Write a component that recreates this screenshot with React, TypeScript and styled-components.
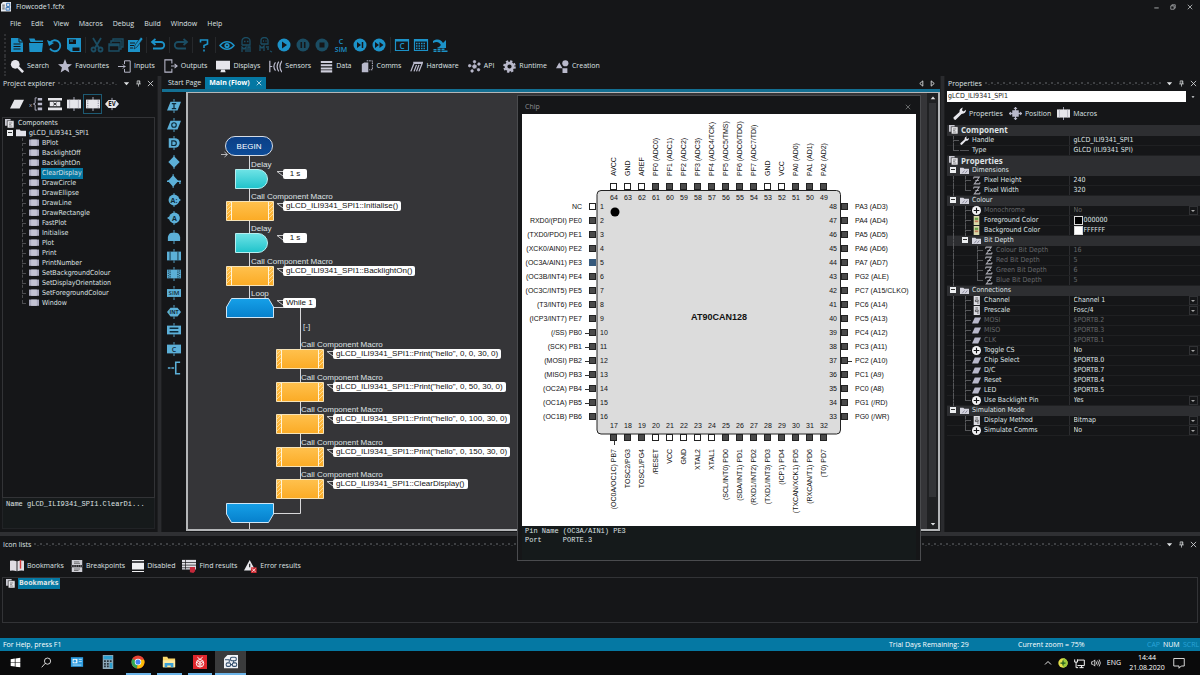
import React from 'react';
import styled, { createGlobalStyle, css } from 'styled-components';

const UI = `"Open Sans", "Noto Sans", sans-serif`;
const GRID = `"DejaVu Sans Condensed", "DejaVu Sans", sans-serif`;
const ARIAL = `"Liberation Sans", Arial, sans-serif`;
const MONO = `"Liberation Mono", "Courier New", monospace`;

const c = {
  bg: '#151618',
  line: '#323336',
  split: '#2a2b2e',
  text: '#dfe2e4',
  dim: '#66686b',
  blue: '#1c92c8',
  dimBlue: '#1b4d63',
  accent: '#0578a3',
  palette: '#5cb0d8',
  lilac: '#b9b9cb',
};

const Global = createGlobalStyle`
  *, *::before, *::after { box-sizing: border-box; }
  body { margin: 0; background: ${c.bg}; color: ${c.text}; font: 7px/10px ${UI}; overflow-x: hidden; }
  button, input, select { font: inherit; color: inherit; margin: 0; padding: 0; border: 0; background: none; border-radius: 0; }
  ul { list-style: none; margin: 0; padding: 0; }
  svg { display: block; flex: none; }
`;

/* ---------- icons ---------- */

const art: Record<string, React.ReactNode> = {
  newDoc: <g fill={c.blue}><path d="M2 1h8l4 4v10H2z" /><path d="M4.500 7h7M4.500 9.500h7M4.500 12h7M10 1v4h4" stroke={c.bg} fill="none" /></g>,
  folder: <g fill={c.blue}><path d="M1 1.500h5.500l1 2H15V5H2.500z" /><path d="M1 6h14l-1 9H1.500z" /></g>,
  reload: <g><path d="M3 6a5.500 5.500 0 1 1 0 5.500" fill="none" stroke={c.blue} strokeWidth="1.800" /><path d="M0 3l2 6 5-3z" fill={c.blue} /></g>,
  save: <g fill={c.blue}><path d="M1 1h14v14H5l-4-3z" /><path d="M3 2.500h7v4.500H3zM6.500 10.500h7V14h-7z" fill={c.bg} /><path d="M4 3.500h3v1H4z" /></g>,
  cut: <g stroke={c.dimBlue} fill="none" strokeWidth="1.800"><path d="M4 1l6 10M12 1L6 11" /><circle cx="4.500" cy="12.500" r="2" /><circle cx="11.500" cy="12.500" r="2" /></g>,
  copies: <g stroke={c.dimBlue} fill="none" strokeWidth="1.400"><path d="M5 4V2h10v8h-2M3 6V4h10v8h-2" /><path d="M1 7h10v7H1zM1 8.500h10" /></g>,
  edit: <g fill={c.blue}><path d="M1 3h12v12H1z" /><path d="M3 6h5M3 8.500h4M3 11h3" stroke={c.bg} /><path d="M7 12l1-4 6-8 2 2-6 8z" stroke={c.bg} strokeWidth=".6" /></g>,
  undo: <g fill="none" stroke={c.blue} strokeWidth="1.800"><path d="M2 5h9a3.200 3.200 0 0 1 0 6.500H3" /><path d="M5.500 2L2 5l3.500 3" /></g>,
  redo: <g fill="none" stroke={c.dimBlue} strokeWidth="1.800"><path d="M14 5H5a3.200 3.200 0 0 0 0 6.500h8" /><path d="M10.500 2L14 5l-3.500 3" /></g>,
  help: <g fill="none" stroke={c.blue} strokeWidth="1.600"><path d="M4.500 5.500V3h7v4L8 8.500V11" /><path d="M8 12.500v2" /></g>,
  eye: <g><path d="M1 8.500c4-5 10-5 14 0-4 5-10 5-14 0z" fill="none" stroke={c.blue} strokeWidth="1.500" /><circle cx="8" cy="8.500" r="2.600" fill={c.blue} /><circle cx="8" cy="8.500" r=".8" fill={c.bg} /></g>,
  ghost: <g fill="none" stroke={c.dimBlue} strokeWidth="1.300"><path d="M4 8V4a4 3.500 0 0 1 8 0v4H4M6 4.500h1.500M9 4.500h1.500M4 15v-5l2 2 2-2v5M10 15v-5h2v5" /></g>,
  ghostR: <g fill="none" stroke={c.dimBlue} strokeWidth="1.300"><path d="M4 7V3.500a3.500 3 0 0 1 7 0V7H4M6 4h1M8.500 4h1M3 14v-5l2 2 2-2v5M9 10h3M10 12h2M13 14l2 1" /></g>,
  play: <g><circle cx="8" cy="8" r="6.500" fill={c.blue} /><path d="M6 4.500l5 3.500-5 3.500z" fill={c.bg} /></g>,
  pause: <g><circle cx="8" cy="8" r="6.500" fill={c.dimBlue} /><path d="M6.300 5v6M9.700 5v6" stroke={c.bg} strokeWidth="1.600" /></g>,
  stop: <g><circle cx="8" cy="8" r="6.500" fill={c.dimBlue} /><path d="M5.500 5.500h5v5h-5z" fill={c.bg} /></g>,
  csim: <g fill={c.blue} fontFamily={UI} fontSize="7" fontWeight="600" textAnchor="middle"><text x="8" y="6.500">C</text><text x="8" y="14.500">SIM</text></g>,
  step: <g><circle cx="8" cy="8" r="6.500" fill={c.blue} /><path d="M5 5l4 3-4 3z" fill={c.bg} /><path d="M10.500 5v6" stroke={c.bg} strokeWidth="1.500" /></g>,
  ff: <g><circle cx="8" cy="8" r="6.500" fill={c.blue} /><path d="M4 5l4 3-4 3zM8.500 5l4 3-4 3z" fill={c.bg} /></g>,
  cwin: <g><path d="M1.500 2.500h13v11h-13z" fill="none" stroke={c.blue} strokeWidth="1.200" /><path d="M1 3.500h14" stroke={c.blue} strokeWidth="2" /><text x="8" y="12" fontFamily={UI} fontSize="8" fontWeight="600" textAnchor="middle" fill={c.blue}>C</text></g>,
  hex: <g stroke={c.blue} fill="none"><path d="M1.500 2.500h13v11h-13z" strokeWidth="1.200" /><path d="M1 3.500h14" strokeWidth="2" /><path d="M3 6.500h10M3 9h10M3 11.500h10" strokeWidth="1.400" strokeDasharray="1.500 1" /></g>,
  flash: <g><path d="M3 15v-3M7 15v-5M11 15v-4M14 15v-2" stroke={c.blue} strokeWidth="3" strokeDasharray="1.500 .6" /><path d="M1 4c5-3 8-1 10 2l3-3v8H6l3-3C7 5 5 4 1 6z" fill={c.blue} /></g>,

  search: <g><circle cx="6" cy="6" r="5" fill="#e6e6ec" /><path d="M9 9l6 6" stroke="#e6e6ec" strokeWidth="3" /></g>,
  star: <path d="M8 0l2.200 5.600 5.800.400-4.500 3.700 1.500 5.800L8 12.300 3 15.500l1.500-5.800L0 6l5.800-.4z" fill={c.lilac} />,
  input: <g fill="none" stroke={c.lilac} strokeWidth="1.200"><path d="M8 5V1h7v14H8v-4" /><path d="M0 8h9M6 5.500L8.500 8 6 10.500" /></g>,
  output: <g fill="none" stroke={c.lilac} strokeWidth="1.200"><path d="M9 5V1H1v14h8v-4" /><path d="M8 8h7M12 5.500l3 2.500-3 2.500" /></g>,
  display: <g fill="#e6e6ec"><path d="M0 2h16v10H0z" /><path d="M6 12h4l1 3H5z" /></g>,
  sensor: <g fill="none" stroke={c.lilac} strokeWidth="1.500"><path d="M1 1v14M1 8h3M8 3q-4 5 0 10M12 2q-4 6 0 12M16 1q-5 7 0 14" /></g>,
  data: <path d="M1 2.500h14M1 6.500h14M1 10.500h14M1 14h14" stroke="#cdcdda" strokeWidth="2.500" />,
  comms: <g><path d="M1 5l3-2h5v12H1z" fill={c.lilac} /><path d="M7 1h7v11h-4" fill="none" stroke={c.lilac} strokeWidth="1.200" strokeDasharray="2 1" /></g>,
  hardware: <g fill="none" stroke={c.lilac} strokeWidth="1.600"><path d="M1 14L5 4h10l-4 10M5 14l3-8M8 14l3-8M4 3h12" /></g>,
  api: <g fill={c.lilac} stroke={c.lilac}><circle cx="8" cy="8" r="2.200" /><path d="M8 8V2M8 8l5-3M8 8l5 4M8 8l-3 5M8 8L2 7" strokeWidth=".4" /><circle cx="8" cy="2" r="1.500" /><circle cx="13.500" cy="5" r="1.500" /><circle cx="13" cy="12" r="1.500" /><circle cx="5" cy="13.500" r="1.500" /><circle cx="2" cy="7" r="1.500" /></g>,
  gear: <g><circle cx="8" cy="8" r="4.300" fill="none" stroke={c.lilac} strokeWidth="3.400" /><circle cx="8" cy="8" r="6.600" fill="none" stroke={c.lilac} strokeWidth="2.400" strokeDasharray="2.800 2.380" /></g>,
  creation: <g fill={c.lilac}><circle cx="11.500" cy="4" r="3.800" /><path d="M0 10l4-7 4 7zM8 10h6v6H8z" /></g>,

  para: <path d="M5 3h11l-5 10H0z" fill="#e6e6ea" />,
  vars: <g><text x="0" y="11" fontFamily={UI} fontSize="7" fill={c.lilac}>x</text><path d="M9 1H7v6L5 8l2 1v6h2" fill="none" stroke={c.lilac} /><path d="M10 1h5v3h-5zM10 6.500h5v3h-5zM10 12h5v3h-5z" fill={c.lilac} /></g>,
  lists: <g fill="#e6e6ea"><path d="M0 1h16v3H0zM0 12h16v3H0zM2 5.500h12v5H2z" /><path d="M6 6.500l4 3M10 6.500l-4 3" stroke={c.bg} /></g>,
  macro: <g><path d="M8 0v16" stroke={c.lilac} /><path d="M0 3h16v10H0z" fill="#e6e6ea" /><path d="M3 3v10M13 3v10" stroke="#a5a5b2" strokeWidth=".8" /></g>,
  compMacro: <g><path d="M8 0v16" stroke={c.lilac} /><path d="M0 3h16v10H0z" fill="#e6e6ea" /><path d="M2 3v10M14 3v10" stroke="#77778a" strokeWidth="1.200" strokeDasharray="1 1" /></g>,
  event: <g><path d="M8 1v14" stroke={c.lilac} /><path d="M4 3.500h8L16 8l-4 4.500H4L0 8z" fill="#e6e6ea" /><text x="8" y="10.500" fontFamily={UI} fontSize="7" fontWeight="700" textAnchor="middle" fill={c.bg}>EV</text></g>,

  pIn: <g><path d="M4 3h12l-4 10H0z" fill={c.palette} /><path d="M8 0v3M8 13v3" stroke={c.palette} /><path d="M5.500 5.200h5M8 5.200v5.800M5.500 11h5" stroke="#0e2a38" strokeWidth="1.400" /></g>,
  pOut: <g><path d="M4 3h12l-4 10H0z" fill={c.palette} /><path d="M8 0v3M8 13v3" stroke={c.palette} /><circle cx="8" cy="8" r="2.600" fill="none" stroke="#0e2a38" strokeWidth="1.300" /></g>,
  pDelay: <g><path d="M2 2.500h7a5.500 5.500 0 0 1 0 11H2z" fill={c.palette} /><path d="M8 0v3M8 13v3" stroke={c.palette} /><path d="M5.500 5.500H8a2.500 2.500 0 0 1 0 5.300H5.500z" fill="none" stroke="#0e2a38" strokeWidth="1.300" /></g>,
  pDec: <g fill={c.palette}><path d="M8 1.500L14.500 8 8 14.500 1.500 8z" /><path d="M7.500 0h1v16h-1z" /></g>,
  pSwitch: <g fill={c.palette}><path d="M7 1.500L13 8l-6 6.500L1 8z" /><path d="M0 7.500h16v1.500H0zM14 7.500h1.500v4H14z" /><path d="M6.500 0h1v16h-1z" /></g>,
  pConnA: <g><path d="M7.500 0h1v16h-1z" fill={c.palette} /><circle cx="8" cy="8" r="6.200" fill={c.palette} /><path d="M13 6l3 2-3 2z" fill={c.palette} /><text x="8" y="11" fontFamily={UI} fontSize="8" fontWeight="700" textAnchor="middle" fill="#0e2a38">A:</text></g>,
  pConnB: <g><path d="M7.500 0h1v16h-1z" fill={c.palette} /><circle cx="8.500" cy="8" r="6.200" fill={c.palette} /><path d="M0 8l3-2v4z" fill={c.palette} /><text x="8.500" y="11" fontFamily={UI} fontSize="8" fontWeight="700" textAnchor="middle" fill="#0e2a38">A</text></g>,
  pLoop: <g fill={c.palette}><path d="M1 12.500V8q1-5 5-5h4q4 0 5 5v4.500z" /><path d="M7.500 0h1v16h-1z" /></g>,
  pMacro: <g><path d="M0 3h16v10H0z" fill={c.palette} /><path d="M3.500 3v10M12.500 3v10" stroke="#0e2a38" /><path d="M8 0v3M8 13v3" stroke={c.palette} /></g>,
  pComp: <g><path d="M0 3h16v10H0z" fill={c.palette} /><path d="M1.500 3v10M14.500 3v10M3.500 4v10M12.500 4v10" stroke="#0e2a38" strokeWidth="1.200" strokeDasharray="1 1" /><path d="M8 0v3M8 13v3" stroke={c.palette} /></g>,
  pSim: <g><path d="M0 3.500h16v9H0z" fill={c.palette} /><text x="8" y="10.500" fontFamily={UI} fontSize="7" fontWeight="600" textAnchor="middle" fill="#0e2a38">SIM</text><path d="M8 0v3M8 13v3" stroke={c.palette} /></g>,
  pInt: <g><path d="M4 3h8l4 5-4 5H4L0 8z" fill={c.palette} /><text x="8" y="10.500" fontFamily={UI} fontSize="6" fontWeight="700" textAnchor="middle" fill="#0e2a38">INT</text><path d="M8 0v3M8 13v3" stroke={c.palette} /></g>,
  pCalc: <g><path d="M0 3h16v10H0z" fill={c.palette} /><path d="M3 6h10M3 10h10" stroke="#0e2a38" strokeWidth="1.600" /><path d="M8 0v3M8 13v3" stroke={c.palette} /></g>,
  pC: <g><path d="M0 3h16v10H0z" fill={c.palette} /><text x="8" y="11" fontFamily={UI} fontSize="8" fontWeight="600" textAnchor="middle" fill="#0e2a38">C</text><path d="M8 0v3M8 13v3" stroke={c.palette} /></g>,
  pNote: <g fill="none" stroke={c.palette} strokeWidth="1.800"><path d="M15 1.500h-5v13h5" /><path d="M1 8h9" strokeDasharray="3 1" /></g>,

  tree: <g><path d="M0 0h10v12H0z" fill="#c8c8d0" /><path d="M4 3h12v13H4z" fill="#ececf0" stroke={c.bg} /><path d="M7 7h6M7 9.500h4M7 12.500h6" stroke="#555" strokeWidth="1.200" /></g>,
  openFolder: <path d="M0 2.500h6l1.500 2H16V13H0z" fill="#e0e0e8" />,
  cell: <g><path d="M0 2.500h16v10H0z" fill="#a9a9bd" /><path d="M3.500 2.500h9v10h-9z" fill="#c3c3d3" /></g>,
  group: <g><path d="M0 3h6l1.500 2H16v9H0z" fill="#d4d4de" /><path d="M4 13l4-5M9 13l4-5" stroke="#77778a" strokeWidth="1.400" /></g>,
  wrench: <path d="M1 15l-.5-2L8 6q-.5-4 4-5.500l-1 3.500 2 1.500 3-2q0 5-5.500 5L3 16z" fill="#e8e8ee" />,
  dash: <path d="M0 8h16" stroke="#6a6a6e" strokeWidth="1.300" />,
  zed: <g fill="none" stroke="#a9a9b2" strokeWidth="1.800"><path d="M3 2h10L4 14h10M3 2v3M14 14v-3M6 8h6" /></g>,
  plus: <g><circle cx="8" cy="8" r="8" fill="#f2f2f4" /><path d="M8 3v10M3 8h10" stroke={c.bg} strokeWidth="2" /></g>,
  color: <g><path d="M3 0h10v16H3z" fill="#d8d8a8" /><path d="M5 3h6v4H5z" fill="#68a04a" /><path d="M5 8h6v3H5z" fill="#c07a5a" /></g>,
  doc: <g><path d="M3 0h11v16H3z" fill="#dedee4" /><path d="M6 3.500h5M6 7h5v3H6zM9 12.500h3" stroke="#333" strokeWidth="1.300" fill="none" /></g>,
  pin: <path d="M5 2.500h11l-5 11H0z" fill={c.lilac} />,
  position: <g fill={c.lilac}><path d="M4 4h8v8H4z" /><path d="M7.200 0h1.600v16H7.200zM0 7.200h16v1.600H0z" /><path d="M5.500 2.500L8 0l2.500 2.500zM5.500 13.500L8 16l2.500-2.500zM2.500 5.500L0 8l2.500 2.500zM13.500 5.500L16 8l-2.500 2.500z" /></g>,

  book: <g><path d="M0 2q4-1 7.500.5V14Q4 12.500 0 13.500zM16 2q-4-1-7.500.5V14q3.500-1.500 7.500-.5z" fill="#e0dde4" /><path d="M12 1v10" stroke="#d43a3a" strokeWidth="1.600" /></g>,
  breakpt: <g><path d="M1 0h14v6.500H1zM1 9.500h14V16H1z" fill="#cfcfd6" /><path d="M4 2.500h7M4 4.500h8M4 12h8M4 14h6" stroke="#555" /><path d="M0 8h16" stroke="#cfcfd6" strokeDasharray="2 1" /></g>,
  disabled: <g fill="#f0f0f2"><path d="M0 0h16v1.500H0zM0 3.500h16v9H0zM0 14.500h16V16H0z" /></g>,
  find: <g><path d="M0 1h16v11H0z" fill="#e0e0e6" /><path d="M0 4h16M0 7h16M0 10h9M4 1v11" stroke={c.bg} strokeWidth=".8" /><path d="M9 9h6v5l-2 2-4-1z" fill="#c4283a" /></g>,
  error: <g><path d="M7 0l7 13H0z" fill="#e8e8ec" /><path d="M7 4.500v4.500" stroke={c.bg} strokeWidth="1.400" /><path d="M8.500 9h7v7h-7z" fill="#d22c34" /><path d="M10 10.500l4 4M14 10.500l-4 4" stroke="#fff" /></g>,

  winLogo: <path d="M1 3.200l6-.9v5.400H1zM8 2.200l7-1v6.500H8zM1 8.500h6v5.400l-6-.9zM8 8.500h7V15l-7-1z" fill="#fff" />,
  taskSearch: <g fill="none" stroke="#fff" strokeWidth="1.200"><circle cx="9.500" cy="6" r="4.500" /><path d="M6.200 9.200L1 15" /></g>,
  mail: <g><path d="M1 2.500h14v11H1z" fill="#2d9ce0" /><path d="M3 4.500h5.500v5H3z" fill="#e8f4fc" /><path d="M10 5h3.500M10 7.500h3.500M3 11.500h10" stroke="#bfe2f8" /><circle cx="5.500" cy="7" r="1.500" fill="#2d9ce0" /></g>,
  calc: <g><path d="M2 0h12v16H2z" fill="#8ea8b8" /><path d="M3 1h10v4H3z" fill="#2da0d0" /><path d="M3.500 7h9M3.500 10h9M3.500 13h9" stroke="#26313a" strokeWidth="2" strokeDasharray="2 1.300" /><path d="M10 9h3v6h-3z" fill="#2da0d0" /></g>,
  chrome: <g><circle cx="8" cy="8" r="7.500" fill="#e94335" /><path d="M8 8L1.500 4.250A7.500 7.500 0 0 0 7 15.400z" fill="#34a853" /><path d="M8 8l-1 7.400A7.500 7.500 0 0 0 15 5.500H8z" fill="#fbbc05" /><circle cx="8" cy="8" r="3.700" fill="#fff" /><circle cx="8" cy="8" r="2.900" fill="#4285f4" /></g>,
  files: <g><path d="M1 2h5l1 2h8v10H1z" fill="#fbd86a" /><path d="M1 6h14v8H1z" fill="#fde9a0" /><path d="M3 14V9h10v5h-3v-2H6v2z" fill="#3aa0d8" /></g>,
  berry: <g><path d="M0 0h16v16H0z" fill="#e0262c" /><g fill="none" stroke="#fff" strokeWidth="1.100"><circle cx="8" cy="9.500" r="4.300" /><circle cx="6.500" cy="8.500" r="1.300" /><circle cx="9.500" cy="8.500" r="1.300" /><circle cx="8" cy="11.500" r="1.300" /><path d="M8 5L5 2.500M8 5l3-2.500" /></g></g>,
  flow: <g><path d="M4 0h12v15H0V4z" fill="#f2f4f8" /><g fill="none" stroke="#35506e" strokeWidth="1.200"><rect x="7.500" y="2.500" width="6.500" height="4" rx="1.500" /><rect x="2.500" y="9" width="5" height="4" rx="1.500" /><rect x="9.500" y="9" width="5" height="4" rx="1.500" /><path d="M11 6.500V9M7.500 11h2M1 5.500h5V8" /></g></g>,
  appFlow: <g><path d="M3 0h13v15H0V3z" fill="#e8ecf2" /><path d="M2 5h4M2 8h4M2 11h4" stroke="#444" strokeWidth="1.400" /><g fill="none" stroke="#2a6ab0" strokeWidth="1.400"><path d="M9 2h5v5H9zM8 9h6v4H8zM11 7v2" /></g></g>,

  down: <path d="M2 5h12l-6 7z" fill={c.text} />,
  thumb: <path d="M5 2h6M5 2v7M11 2v7M9.500 2v7M3 9h10M8 9v6" fill="none" stroke={c.text} strokeWidth="1.600" />,
  close: <path d="M2 2l12 12M14 2L2 14" stroke="currentColor" strokeWidth="1.800" />,
  min: <path d="M3 9h10" stroke={c.text} strokeWidth="1.600" />,
  restore: <path d="M5 5V2h9v9h-3M2 5h9v9H2z" fill="none" stroke={c.text} strokeWidth="1.500" />,
  left: <path d="M11 2v12L4 8z" fill="none" stroke={c.text} strokeWidth="2" />,
  right: <path d="M5 2v12l7-6z" fill="none" stroke={c.text} strokeWidth="2" />,
  up: <path d="M2 11h12L8 4z" fill={c.text} />,
  chev: <path d="M2 11l6-6 6 6" fill="none" stroke="#fff" strokeWidth="1.800" />,
  shield: <g><circle cx="8" cy="8" r="7.500" fill="#e4e04a" /><path d="M8 .5a7.500 7.500 0 0 1 0 15" fill="#9ccb3c" /><path d="M8 4v8M4 8h8" stroke="#1f5a1f" strokeWidth="2" /></g>,
  network: <g fill="none" stroke="#fff" strokeWidth="1.400"><path d="M5 3h10v8H5M8 14h6M11 11v3M1 2v4h4V2M3 6v8h3" /></g>,
  volume: <g fill="none" stroke="#fff" strokeWidth="1.200"><path d="M1 6h2l3-3v10l-3-3H1zM8 5.500q2 2.500 0 5M10.500 4q3 4 0 8M13 2.500q4 5.500 0 11" /></g>,
  action: <path d="M1 2h14v10h-4l-3 3v-3H1z" fill="none" stroke="#fff" strokeWidth="1.100" />,
};

const Icon = ({ name, size = 14 }: { name: string; size?: number }) => (
  <svg width={size} height={size} viewBox="0 0 16 16" aria-hidden="true">{art[name]}</svg>
);

/* ---------- shell ---------- */

const Page = styled.div`
  min-height: 100vh;
  display: flex;
  flex-direction: column;
`;

const TitleBar = styled.header`
  height: 14px;
  display: flex;
  align-items: center;
  gap: 5px;
  padding: 0 4px 0 1px;
`;
const WindowTitle = styled.h1`
  flex: 1;
  margin: 0;
  font: 400 7px/12px ${UI};
`;
const IconButton = styled.button<{ $w?: number }>`
  width: ${p => p.$w ?? 12}px;
  height: 12px;
  display: flex;
  align-items: center;
  justify-content: center;
`;

const MenuBar = styled.nav`
  height: 20px;
  display: flex;
  align-items: center;
  gap: 10px;
  padding: 0 10px;
`;

const gripper = css`
  border-left: 2px dotted #2f3033;
`;
const ToolBar = styled.div`
  ${gripper}
  height: 22px;
  margin-left: 4px;
  padding-left: 3px;
  display: flex;
  align-items: center;
  gap: 3px;
`;
const ToolButton = styled.button`
  width: 16px;
  height: 18px;
  display: flex;
  align-items: center;
  justify-content: center;
`;
const Divider = styled.span`
  width: 1px;
  height: 16px;
  background: #26282b;
`;
const ToolBoxBar = styled.div`
  ${gripper}
  height: 20px;
  margin-left: 4px;
  padding-left: 4px;
  display: flex;
  align-items: center;
  gap: 9px;
`;
const LabelButton = styled.button`
  display: flex;
  align-items: center;
  gap: 3px;
  white-space: nowrap;
`;

const Workspace = styled.main`
  flex: 1;
  display: grid;
  grid-template-columns: 157px 5px minmax(0, 1fr) 5px 255px;
`;
const Splitter = styled.div`
  background: ${c.split};
  border-left: 1px solid #1d1e20;
  border-right: 1px solid #1d1e20;
`;
const HSplitter = styled.div`
  height: 4px;
  background: #2f3033;
`;

const Panel = styled.section`
  display: flex;
  flex-direction: column;
  min-width: 0;
`;
const PanelHead = styled.div`
  height: 15px;
  display: flex;
  align-items: center;
  padding: 0 1px 0 3px;
`;
const PanelTitle = styled.h2`
  margin: 0 3px 0 0;
  font: 400 7px/12px ${UI};
  white-space: nowrap;
`;
const Grip = styled.span`
  flex: 1;
  height: 3px;
  margin-right: 2px;
  background:
    radial-gradient(circle at 1px 1px, #3e4043 1px, transparent 1px) 0 0 / 6px 4px,
    radial-gradient(circle at 1px 1px, #303235 1px, transparent 1px) 3px 2px / 6px 4px;
`;

const DockHead = ({ title }: { title: string }) => (
  <PanelHead>
    <PanelTitle>{title}</PanelTitle>
    <Grip />
    <IconButton aria-label="Window position"><Icon name="down" size={7} /></IconButton>
    <IconButton aria-label="Auto hide"><Icon name="thumb" size={7} /></IconButton>
    <IconButton aria-label="Close"><Icon name="close" size={7} /></IconButton>
  </PanelHead>
);

/* ---------- project explorer ---------- */

const ViewBar = styled.div`
  height: 26px;
  display: flex;
  align-items: center;
  padding-left: 7px;
`;
const ViewButton = styled.button<{ $on?: boolean }>`
  width: 19px;
  height: 20px;
  display: flex;
  align-items: center;
  justify-content: center;
  border: 1px solid ${p => (p.$on ? '#1d5a73' : 'transparent')};
`;
const TreeBox = styled.div`
  flex: 1;
  margin: 0 2px;
  border: 1px solid ${c.line};
  font: 7px/10px ${GRID};
`;
const TreeRow = styled.li<{ $pad?: number }>`
  height: 10px;
  display: flex;
  align-items: center;
  gap: 3px;
  padding-left: ${p => p.$pad ?? 0}px;
`;
const TreeRoot = styled(TreeRow)`
  gap: 4px;
`;
const Branch = styled.ul`
  position: relative;
  margin-left: 19px;
  &::before {
    content: '';
    position: absolute;
    top: 0;
    bottom: 5px;
    left: 0;
    border-left: 1px dashed #4c4d50;
  }
`;
const Twig = styled.span`
  width: 4px;
  border-top: 1px dashed #4c4d50;
`;
const TreeLabel = styled.span<{ $on?: boolean; $bold?: boolean }>`
  line-height: 9px;
  font-weight: ${p => (p.$bold ? 700 : 400)};
  ${p => p.$on && css`background: ${c.accent}; outline: 1px solid ${c.accent};`}
`;
const Toggle = styled.button`
  width: 6px;
  height: 6px;
  background: #eceef0;
  position: relative;
  flex: none;
  &::after {
    content: '';
    position: absolute;
    left: 1px;
    right: 1px;
    top: 2px;
    height: 1px;
    background: #333;
  }
`;
const InfoPane = styled.pre`
  margin: 0 2px 3px;
  height: 31px;
  padding: 1px 3px;
  border: 1px solid #212326;
  border-top: 0;
  background: #161a1b;
  font: 7px/10px ${MONO};
  overflow: hidden;
`;

const macros = ['BPlot', 'BacklightOff', 'BacklightOn', 'ClearDisplay', 'DrawCircle', 'DrawEllipse', 'DrawLine',
  'DrawRectangle', 'FastPlot', 'Initialise', 'Plot', 'Print', 'PrintNumber', 'SetBackgroundColour',
  'SetDisplayOrientation', 'SetForegroundColour', 'Window'];

const Explorer = () => (
  <Panel>
    <DockHead title="Project explorer" />
    <ViewBar>
      {['para', 'vars', 'lists', 'macro', 'compMacro', 'event'].map(n => (
        <ViewButton key={n} aria-label={n} $on={n === 'compMacro'}><Icon name={n} /></ViewButton>
      ))}
    </ViewBar>
    <TreeBox>
      <ul>
        <TreeRoot $pad={2}><Icon name="tree" size={9} /><TreeLabel>Components</TreeLabel></TreeRoot>
        <TreeRow $pad={4}><Toggle aria-label="Collapse" /><Icon name="openFolder" size={10} /><TreeLabel>gLCD_ILI9341_SPI1</TreeLabel></TreeRow>
        <Branch>
          {macros.map(m => (
            <TreeRow key={m}><Twig /><Icon name="cell" size={10} /><TreeLabel $on={m === 'ClearDisplay'}>{m}</TreeLabel></TreeRow>
          ))}
        </Branch>
      </ul>
    </TreeBox>
    <InfoPane>Name gLCD_ILI9341_SPI1.ClearDi...</InfoPane>
  </Panel>
);

/* ---------- editor ---------- */

const Editor = styled(Panel)`
  position: relative;
`;
const TabBar = styled.div`
  height: 16px;
  display: flex;
  align-items: flex-end;
  padding: 0 2px;
  border-bottom: 3px solid #136f92;
`;
const Tab = styled.button<{ $on?: boolean }>`
  height: 12px;
  display: flex;
  align-items: center;
  gap: 6px;
  padding: 0 4px;
  ${p => p.$on && css`background: ${c.accent}; color: #fff; font-weight: 700;`}
`;
const Spacer = styled.span`
  flex: 1;
`;
const EditorBody = styled.div`
  flex: 1;
  display: flex;
  padding-bottom: 1px;
`;
const Palette = styled.div`
  width: 24px;
  height: 283px;
  padding-top: 7px;
  display: flex;
  flex-direction: column;
  align-items: center;
  justify-content: space-between;
`;
const Canvas = styled.div`
  flex: 1;
  position: relative;
  background: #353538;
  border: 2px solid #b4b6b8;
  border-top-width: 1px;
  overflow: hidden;
  font: 8px/10px ${ARIAL};
`;
const Wires = styled.svg`
  position: absolute;
  inset: 0;
`;
const Node = styled.div<{ $x: number; $y: number }>`
  position: absolute;
  left: ${p => p.$x}px;
  top: ${p => p.$y}px;
`;
const NodeTitle = styled.span`
  position: absolute;
  left: 25px;
  bottom: 100%;
  line-height: 9px;
  white-space: nowrap;
`;
const Callout = styled.span`
  position: absolute;
  left: 57px;
  top: 0;
  min-width: 24px;
  padding: 0 3px;
  border-radius: 2px;
  background: #fff;
  color: #111;
  text-align: center;
  white-space: nowrap;
`;
const Tail = styled.svg`
  position: absolute;
  left: 50px;
  top: 1px;
`;
const CanvasScroll = styled.div`
  position: absolute;
  top: 0;
  right: 0;
  bottom: 0;
  width: 11px;
  background: #202123;
  display: flex;
  flex-direction: column;
  align-items: center;
  justify-content: space-between;
  padding: 2px 0;
`;
const ScrollThumb = styled.span`
  flex: 1;
  width: 7px;
  margin: 2px 0 24px;
  background: #333437;
`;

type Kind = 'begin' | 'delay' | 'macro' | 'loop' | 'end';
const shapes: Record<Kind, React.ReactNode> = {
  begin: (
    <>
      <rect x=".5" y=".5" width="47" height="19" rx="9.500" fill="url(#navy)" stroke="#d5dbe4" />
      <text x="24" y="13" fontSize="8" textAnchor="middle" fill="#fff">BEGIN</text>
    </>
  ),
  delay: <path d="M9.500.5H32a9.500 9.500 0 0 1 0 19H9.500z" fill="url(#aqua)" stroke="#b6eef0" />,
  macro: (
    <>
      <path d="M.5.500h47v19H.5z" fill="url(#amber)" stroke="#f6e3b8" />
      <path d="M5.500 1v18M42.500 1v18" stroke="#fff3d6" />
      <path d="M1 5l4-4M1 9l4-4M1 13l4-4M1 17l4-4M43 5l4-4M43 9l4-4M43 13l4-4M43 17l4-4" stroke="#ffe2a4" strokeWidth=".8" />
    </>
  ),
  loop: <path d="M5.500.5h37L47.500 9v10.500H.5V9z" fill="url(#azure)" stroke="#cfe6f6" />,
  end: <path d="M.5.500h47V11l-5 8.500h-37L.5 11z" fill="url(#azure)" stroke="#cfe6f6" />,
};

const P = 'gLCD_ILI9341_SPI1::';
const flow: { kind: Kind; x: number; y: number; title?: string; note?: string }[] = [
  { kind: 'begin', x: 37, y: 43 },
  { kind: 'delay', x: 38, y: 76, title: 'Delay', note: '1 s' },
  { kind: 'macro', x: 38, y: 108, title: 'Call Component Macro', note: `${P}Initialise()` },
  { kind: 'delay', x: 38, y: 140, title: 'Delay', note: '1 s' },
  { kind: 'macro', x: 38, y: 173, title: 'Call Component Macro', note: `${P}BacklightOn()` },
  { kind: 'loop', x: 38, y: 205, title: 'Loop', note: 'While 1' },
  { kind: 'macro', x: 88, y: 256, title: 'Call Component Macro', note: `${P}Print("hello", 0, 0, 30, 0)` },
  { kind: 'macro', x: 88, y: 289, title: 'Call Component Macro', note: `${P}Print("hello", 0, 50, 30, 0)` },
  { kind: 'macro', x: 88, y: 321, title: 'Call Component Macro', note: `${P}Print("hello", 0, 100, 30, 0)` },
  { kind: 'macro', x: 88, y: 354, title: 'Call Component Macro', note: `${P}Print("hello", 0, 150, 30, 0)` },
  { kind: 'macro', x: 88, y: 386, title: 'Call Component Macro', note: `${P}ClearDisplay()` },
  { kind: 'end', x: 38, y: 410 },
];

const grad = (id: string, a: string, b: string) => (
  <linearGradient id={id} x1="0" y1="0" x2="0" y2="1"><stop offset="0" stopColor={a} /><stop offset="1" stopColor={b} /></linearGradient>
);

const FlowChart = () => (
  <>
    <Wires width="100%" height="100%" fill="none" stroke="#d8d8da">
      <defs>
        {grad('navy', '#0b3f86', '#0d4c98')}
        {grad('aqua', '#6fe3e6', '#1fc3cb')}
        {grad('amber', '#ffc14e', '#fbab25')}
        {grad('azure', '#16a0e8', '#0680cc')}
      </defs>
      <path d="M61.500 60v146M86 214.500h26.500v206H86M61.500 429v20" />
      <path d="M33 61.500h6M36.500 59l3 2.500-3 2.500" strokeWidth=".8" />
    </Wires>
    {flow.map(n => (
      <Node key={n.y} $x={n.x} $y={n.y}>
        {n.title && <NodeTitle>{n.title}</NodeTitle>}
        <svg width="48" height="20">{shapes[n.kind]}</svg>
        {n.note && (
          <>
            <Tail width="8" height="8" fill="none" stroke="#c8c8ca"><path d="M8 1.500H1L7 6" /></Tail>
            <Callout>{n.note}</Callout>
          </>
        )}
      </Node>
    ))}
    <Node $x={115} $y={229}>[-]</Node>
  </>
);

/* ---------- chip window ---------- */

const ChipWindow = styled.section`
  position: absolute;
  z-index: 2;
  left: 355px;
  top: 19px;
  width: 404px;
  padding: 0 4px;
  border: 1px solid #4a4b4e;
  background: ${c.bg};
`;
const ChipHead = styled.div`
  height: 18px;
  display: flex;
  align-items: center;
  justify-content: space-between;
  padding: 4px 2px 0 3px;
  color: #8d8f91;
`;
const ChipInfo = styled.pre`
  margin: 0;
  height: 34px;
  padding: 1px 3px;
  font: 7px/9px ${MONO};
  background: #151a1b;
`;

const leftPins = ['NC', 'RXD0/(PDI) PE0', '(TXD0/PDO) PE1', '(XCK0/AIN0) PE2', '(OC3A/AIN1) PE3', '(OC3B/INT4) PE4',
  '(OC3C/INT5) PE5', '(T3/INT6) PE6', '(ICP3/INT7) PE7', '(/SS) PB0', '(SCK) PB1', '(MOSI) PB2', '(MISO) PB3',
  '(OC2A) PB4', '(OC1A) PB5', '(OC1B) PB6'];
const bottomPins = ['(OC0A/OC1C) PB7', 'TOSC2/PG3', 'TOSC1/PG4', '/RESET', 'VCC', 'GND', 'XTAL2', 'XTAL1',
  '(SCL/INT0) PD0', '(SDA/INT1) PD1', '(RXD1/INT2) PD2', '(TXD1/INT3) PD3', '(ICP1) PD4', '(TXCAN/XCK1) PD5',
  '(RXCAN/T1) PD6', '(T0) PD7'];
const rightPins = ['PA3 (AD3)', 'PA4 (AD4)', 'PA5 (AD5)', 'PA6 (AD6)', 'PA7 (AD7)', 'PG2 (ALE)', 'PC7 (A15/CLKO)',
  'PC6 (A14)', 'PC5 (A13)', 'PC4 (A12)', 'PC3 (A11)', 'PC2 (A10)', 'PC1 (A9)', 'PC0 (A8)', 'PG1 (/RD)', 'PG0 (/WR)'];
const topPins = ['AVCC', 'GND', 'AREF', 'PF0 (ADC0)', 'PF1 (ADC1)', 'PF2 (ADC2)', 'PF3 (ADC3)', 'PF4 (ADC4/TCK)',
  'PF5 (ADC5/TMS)', 'PF6 (ADC6/TDO)', 'PF7 (ADC7/TDI)', 'GND', 'VCC', 'PA0 (AD0)', 'PA1 (AD1)', 'PA2 (AD2)'];

const unused = new Set([1, 20, 21, 22, 23, 24, 52, 53, 62, 63, 64]);
const pinFill = (n: number) => (n === 5 ? '#35597c' : unused.has(n) ? '#fff' : '#4a4a4a');
const Pad = ({ x, y, n }: { x: number; y: number; n: number }) => (
  <rect x={x} y={y} width="6" height="6" fill={pinFill(n)} stroke={n === 5 ? '#35597c' : '#222'} />
);

const Chip = () => (
  <ChipWindow>
    <ChipHead>Chip<IconButton aria-label="Close"><Icon name="close" size={6} /></IconButton></ChipHead>
    <svg width="394" height="412" fontFamily={ARIAL} fontSize="7" fill="#111" role="img" aria-label="AT90CAN128 pinout">
      <rect width="394" height="412" fill="#fff" />
      <rect x="75" y="76.500" width="243.500" height="243.500" rx="4" fill="#dcdcdc" stroke="#222" />
      <circle cx="93" cy="98" r="4.500" fill="#000" />
      <text x="197" y="206" fontSize="9" fontWeight="700" textAnchor="middle">AT90CAN128</text>
      {leftPins.map((t, i) => (
        <g key={i}>
          <Pad x={67.500} y={89.500 + i * 14} n={i + 1} />
          {i >= 9 && i < 15 && <path d={`M63 ${93.500 + i * 14}h5`} stroke="#333" />}
          <text x="60" y={95 + i * 14} textAnchor="end">{t}</text>
          <text x="78" y={95 + i * 14}>{i + 1}</text>
        </g>
      ))}
      {rightPins.map((t, i) => (
        <g key={i}>
          <Pad x={319.500} y={89.500 + i * 14} n={48 - i} />
          {i === 11 && <path d={`M326 ${93.500 + i * 14}h4`} stroke="#333" />}
          <text x="333" y={95 + i * 14}>{t}</text>
          <text x="315" y={95 + i * 14} textAnchor="end">{48 - i}</text>
        </g>
      ))}
      {topPins.map((t, i) => (
        <g key={i}>
          <Pad x={88.500 + i * 14} y={69.500} n={64 - i} />
          <text transform={`translate(${94 + i * 14} 62) rotate(-90)`}>{t}</text>
          <text x={92 + i * 14} y="86" textAnchor="middle">{64 - i}</text>
        </g>
      ))}
      {bottomPins.map((t, i) => (
        <g key={i}>
          <Pad x={88.500 + i * 14} y={320.500} n={17 + i} />
          <text transform={`translate(${94 + i * 14} 335) rotate(-90)`} textAnchor="end">{t}</text>
          <text x={92 + i * 14} y="314" textAnchor="middle">{17 + i}</text>
        </g>
      ))}
      <path d="M92.500 327v4" stroke="#333" />
    </svg>
    <ChipInfo>{'Pin Name (OC3A/AIN1) PE3\nPort     PORTE.3'}</ChipInfo>
  </ChipWindow>
);

const paletteItems = ['pIn', 'pOut', 'pDelay', 'pDec', 'pSwitch', 'pConnA', 'pConnB', 'pLoop', 'pMacro', 'pComp',
  'pSim', 'pInt', 'pCalc', 'pC', 'pNote'];

const FlowEditor = () => (
  <Editor>
    <TabBar>
      <Tab>Start Page</Tab>
      <Tab $on>Main (Flow) <Icon name="close" size={6} /></Tab>
      <Spacer />
      <IconButton $w={10} aria-label="Scroll tabs left"><Icon name="left" size={7} /></IconButton>
      <IconButton $w={12} aria-label="Scroll tabs right"><Icon name="right" size={7} /></IconButton>
    </TabBar>
    <EditorBody>
      <Palette>
        {paletteItems.map(n => <button key={n} aria-label={n}><Icon name={n} /></button>)}
      </Palette>
      <Canvas>
        <FlowChart />
        <CanvasScroll>
          <Icon name="up" size={6} />
          <ScrollThumb />
          <Icon name="down" size={6} />
        </CanvasScroll>
      </Canvas>
    </EditorBody>
    <Chip />
  </Editor>
);

/* ---------- properties ---------- */

const Combo = styled.div`
  margin-left: 2px;
  height: 11px;
  display: flex;
  font: 7px/11px ${GRID};
`;
const ComboInput = styled.input`
  flex: 1;
  min-width: 0;
  background: #fff;
  color: #222;
  padding-left: 1px;
`;
const ComboArrow = styled.button`
  width: 14px;
  display: flex;
  align-items: center;
  justify-content: center;
`;
const PropTabs = styled.div`
  height: 23px;
  display: flex;
  align-items: center;
  gap: 6px;
  padding-left: 8px;
`;
const PropTable = styled.table`
  margin-left: 2px;
  width: calc(100% - 2px);
  table-layout: fixed;
  border-collapse: collapse;
  font: 7px/9px ${GRID};
`;
const NameCol = styled.col`
  width: 122px;
`;
const Row = styled.tr<{ $head?: boolean; $dim?: boolean }>`
  height: 10px;
  background: ${p => (p.$head ? '#2d2e31' : 'transparent')};
  color: ${p => (p.$dim ? c.dim : c.text)};
  td, th { padding: 0; font-weight: inherit; text-align: left; height: 10px; border-bottom: 1px solid ${p => (p.$head ? '#2d2e31' : '#1f2022')}; }
  td { border-left: 1px solid #2b2c2f; padding-left: 4px; }
`;
const NameCell = styled.div`
  display: flex;
  align-items: center;
  height: 9px;
  gap: 3px;
  white-space: nowrap;
`;
const Guide = styled.span<{ $last?: boolean; $twig?: boolean }>`
  align-self: stretch;
  position: relative;
  width: 9px;
  &::before {
    content: '';
    position: absolute;
    left: 6px;
    top: 0;
    bottom: ${p => (p.$last ? '4px' : '-1px')};
    border-left: 1px dashed #56575a;
  }
  &::after {
    content: '';
    position: absolute;
    left: 7px;
    top: 4px;
    width: ${p => (p.$twig ? '5px' : '0')};
    border-top: 1px dashed #56575a;
  }
`;
const Gap = styled.span`
  width: 9px;
`;
const HeadToggle = styled.span`
  width: 9px;
  padding-left: 3px;
  display: flex;
`;
const IconSlot = styled.span<{ $top?: boolean }>`
  padding-left: ${p => (p.$top ? 2 : 1)}px;
`;
const Caption = styled.span<{ $bold?: boolean }>`
  font-size: ${p => (p.$bold ? 8 : 7)}px;
  font-weight: ${p => (p.$bold ? 700 : 400)};
  font-family: ${p => (p.$bold ? UI : GRID)};
`;
const Value = styled.div`
  display: flex;
  align-items: center;
  height: 9px;
`;
const Swatch = styled.span<{ $c: string }>`
  width: 9px;
  height: 9px;
  margin-right: 1px;
  background: ${p => p.$c};
  border: 1px solid #d8d8d8;
`;
const Pick = styled.div`
  position: relative;
  height: 9px;
  padding-right: 3px;
  &::after {
    content: '';
    position: absolute;
    right: 5px;
    top: 4px;
    border: 2px solid transparent;
    border-top-color: #a8a8a8;
    border-bottom: 0;
    pointer-events: none;
  }
  &::before {
    content: '';
    position: absolute;
    right: 2px;
    top: 0;
    width: 9px;
    height: 9px;
    border: 1px solid #303134;
    pointer-events: none;
  }
`;
const Select = styled.select`
  appearance: none;
  display: block;
  width: 100%;
  height: 9px;
  line-height: 9px;
  opacity: 1;
`;

type Prop = { d: 0 | 1 | 2 | 3; icon: string; name: string; value?: string; dim?: boolean; last?: boolean; pick?: boolean; swatch?: string; head?: boolean; top?: boolean };
const props: Prop[] = [
  { d: 0, icon: 'tree', name: 'Component', head: true, top: true },
  { d: 1, icon: 'wrench', name: 'Handle', value: 'gLCD_ILI9341_SPI1' },
  { d: 1, icon: 'dash', name: 'Type', value: 'GLCD (ILI9341 SPI)', last: true },
  { d: 0, icon: 'tree', name: 'Properties', head: true, top: true },
  { d: 1, icon: 'group', name: 'Dimensions', head: true },
  { d: 2, icon: 'zed', name: 'Pixel Height', value: '240' },
  { d: 2, icon: 'zed', name: 'Pixel Width', value: '320', last: true },
  { d: 1, icon: 'group', name: 'Colour', head: true },
  { d: 2, icon: 'plus', name: 'Monochrome', value: 'No', pick: true, dim: true },
  { d: 2, icon: 'color', name: 'Foreground Color', value: '000000', swatch: '#000' },
  { d: 2, icon: 'color', name: 'Background Color', value: 'FFFFFF', swatch: '#fff' },
  { d: 2, icon: 'group', name: 'Bit Depth', head: true },
  { d: 3, icon: 'zed', name: 'Colour Bit Depth', value: '16', dim: true },
  { d: 3, icon: 'zed', name: 'Red Bit Depth', value: '5', dim: true },
  { d: 3, icon: 'zed', name: 'Green Bit Depth', value: '6', dim: true },
  { d: 3, icon: 'zed', name: 'Blue Bit Depth', value: '5', dim: true, last: true },
  { d: 1, icon: 'group', name: 'Connections', head: true },
  { d: 2, icon: 'doc', name: 'Channel', value: 'Channel 1', pick: true },
  { d: 2, icon: 'doc', name: 'Prescale', value: 'Fosc/4', pick: true },
  { d: 2, icon: 'pin', name: 'MOSI', value: '$PORTB.2', dim: true },
  { d: 2, icon: 'pin', name: 'MISO', value: '$PORTB.3', dim: true },
  { d: 2, icon: 'pin', name: 'CLK', value: '$PORTB.1', dim: true },
  { d: 2, icon: 'plus', name: 'Toggle CS', value: 'No', pick: true },
  { d: 2, icon: 'pin', name: 'Chip Select', value: '$PORTB.0' },
  { d: 2, icon: 'pin', name: 'D/C', value: '$PORTB.7' },
  { d: 2, icon: 'pin', name: 'Reset', value: '$PORTB.4' },
  { d: 2, icon: 'pin', name: 'LED', value: '$PORTB.5' },
  { d: 2, icon: 'plus', name: 'Use Backlight Pin', value: 'Yes', pick: true, last: true },
  { d: 1, icon: 'group', name: 'Simulation Mode', head: true },
  { d: 2, icon: 'doc', name: 'Display Method', value: 'Bitmap', pick: true },
  { d: 2, icon: 'plus', name: 'Simulate Comms', value: 'No', pick: true, last: true },
];
const simStart = props.findIndex(p => p.name === 'Simulation Mode');

const PropRow = ({ p, i }: { p: Prop; i: number }) => {
  const guides: React.ReactNode[] = [];
  const depth = p.head ? p.d - 1 : p.d;
  for (let k = 1; k <= depth; k++) {
    const own = k === p.d;
    const blank = (k === 1 && i > simStart) || (p.d === 3 && k === 2);
    guides.push(blank ? <Gap key={k} /> : <Guide key={k} $twig={own} $last={own && p.last} />);
  }
  return (
    <Row $head={p.head} $dim={p.dim}>
      <th scope="row" colSpan={p.head ? 2 : 1}>
        <NameCell>
          {guides}
          {p.head && !p.top && <HeadToggle><Toggle aria-label={`Collapse ${p.name}`} /></HeadToggle>}
          <IconSlot $top={p.top}><Icon name={p.icon} size={9} /></IconSlot>
          <Caption $bold={p.top} id={`prop-${i}`}>{p.name}</Caption>
        </NameCell>
      </th>
      {!p.head && (
        <td>
          {p.pick ? (
            <Pick><Select aria-labelledby={`prop-${i}`} disabled={p.dim} defaultValue={p.value}><option>{p.value}</option></Select></Pick>
          ) : (
            <Value>{p.swatch && <Swatch $c={p.swatch} />}{p.value}</Value>
          )}
        </td>
      )}
    </Row>
  );
};

const Properties = () => (
  <Panel>
    <DockHead title="Properties" />
    <Combo>
      <ComboInput aria-label="Component" defaultValue="gLCD_ILI9341_SPI1" />
      <ComboArrow aria-label="Choose component"><Icon name="down" size={4} /></ComboArrow>
    </Combo>
    <PropTabs>
      <LabelButton><Icon name="wrench" size={13} />Properties</LabelButton>
      <LabelButton><Icon name="position" size={13} />Position</LabelButton>
      <LabelButton><Icon name="macro" size={13} />Macros</LabelButton>
    </PropTabs>
    <PropTable>
      <colgroup><NameCol /><col /></colgroup>
      <tbody>{props.map((p, i) => <PropRow key={i} p={p} i={i} />)}</tbody>
    </PropTable>
  </Panel>
);

/* ---------- bottom ---------- */

const ListsPanel = styled(Panel)`
  height: 102px;
  padding-top: 1px;
`;
const ListTabs = styled.div`
  height: 25px;
  display: flex;
  align-items: center;
  gap: 7px;
  padding: 3px 0 0 10px;
`;
const ListBox = styled.div`
  height: 46px;
  margin: 0 2px;
  padding: 0 3px;
  border: 1px solid ${c.line};
  font: 7px/10px ${GRID};
`;
const StatusBar = styled.footer`
  height: 13px;
  display: grid;
  grid-template-columns: 1fr 129px 129px 16px 20px 17px;
  align-items: center;
  padding-left: 3px;
  background: ${c.accent};
  color: #fff;
  white-space: nowrap;
  overflow: hidden;
`;
const Lock = styled.span<{ $on?: boolean }>`
  color: ${p => (p.$on ? '#fff' : '#2aa3d8')};
`;

const TaskBar = styled.nav`
  height: 24px;
  display: flex;
  align-items: stretch;
  justify-content: space-between;
  background: #0a0a0b;
`;
const Tasks = styled.div`
  width: 246px;
  display: grid;
  grid-template-columns: repeat(8, 1fr);
`;
const Task = styled.button<{ $state?: 'open' | 'active' }>`
  display: flex;
  align-items: center;
  justify-content: center;
  margin: 0 ${p => (p.$state === 'open' ? 3 : 0)}px;
  border-bottom: 2px solid ${p => (p.$state ? '#6cb4e8' : 'transparent')};
  background: ${p => (p.$state === 'active' ? '#3a3b3c' : 'transparent')};
`;
const Tray = styled.div`
  display: flex;
  align-items: center;
  gap: 6px;
  padding-right: 15px;
  color: #fff;
`;
const Clock = styled.time`
  width: 40px;
  text-align: center;
`;

const tools: (string | null)[] = ['newDoc', 'folder', 'reload', 'save', null, 'cut', 'copies', 'edit', null, 'undo', null,
  'redo', null, 'help', null, 'eye', 'ghost', 'ghostR', 'play', 'pause', 'stop', 'csim', 'step', 'ff', null, 'cwin', 'hex', 'flash'];
const boxes: [string, string, number][] = [['search', 'Search', 14], ['star', 'Favourites', 14], ['input', 'Inputs', 13],
  ['output', 'Outputs', 14], ['display', 'Displays', 14], ['sensor', 'Sensors', 13], ['data', 'Data', 13],
  ['comms', 'Comms', 13], ['hardware', 'Hardware', 13], ['api', 'API', 13], ['gear', 'Runtime', 13], ['creation', 'Creation', 13]];
const lists: [string, string, number][] = [['book', 'Bookmarks', 14], ['breakpt', 'Breakpoints', 12], ['disabled', 'Disabled', 12],
  ['find', 'Find results', 14], ['error', 'Error results', 13]];
const tasks: [string, ('open' | 'active')?][] = [['winLogo'], ['taskSearch'], ['mail'], ['calc'], ['chrome', 'open'],
  ['files', 'open'], ['berry', 'open'], ['flow', 'active']];

export default function App() {
  return (
    <Page>
      <Global />
      <TitleBar>
        <Icon name="appFlow" size={10} />
        <WindowTitle>Flowcode1.fcfx</WindowTitle>
        <IconButton aria-label="Minimise"><Icon name="min" size={7} /></IconButton>
        <IconButton aria-label="Restore"><Icon name="restore" size={6} /></IconButton>
        <IconButton aria-label="Close"><Icon name="close" size={6} /></IconButton>
      </TitleBar>
      <MenuBar>
        {['File', 'Edit', 'View', 'Macros', 'Debug', 'Build', 'Window', 'Help'].map(m => <button key={m}>{m}</button>)}
      </MenuBar>
      <ToolBar>
        {tools.map((t, i) => (t ? <ToolButton key={i} aria-label={t}><Icon name={t} size={16} /></ToolButton> : <Divider key={i} />))}
      </ToolBar>
      <ToolBoxBar>
        {boxes.map(([i, t, s]) => <LabelButton key={t}><Icon name={i} size={s} />{t}</LabelButton>)}
      </ToolBoxBar>
      <Workspace>
        <Explorer />
        <Splitter />
        <FlowEditor />
        <Splitter />
        <Properties />
      </Workspace>
      <HSplitter />
      <ListsPanel>
        <DockHead title="Icon lists" />
        <ListTabs>
          {lists.map(([i, t, s]) => <LabelButton key={t}><Icon name={i} size={s} />{t}</LabelButton>)}
        </ListTabs>
        <ListBox>
          <ul><TreeRoot><Icon name="tree" size={9} /><TreeLabel $on $bold>Bookmarks</TreeLabel></TreeRoot></ul>
        </ListBox>
      </ListsPanel>
      <StatusBar>
        <span>For Help, press F1</span>
        <span>Trial Days Remaining: 29</span>
        <span>Current zoom = 75%</span>
        <Lock>CAP</Lock>
        <Lock $on>NUM</Lock>
        <Lock>SCRL</Lock>
      </StatusBar>
      <TaskBar>
        <Tasks>
          {tasks.map(([n, s]) => <Task key={n} $state={s} aria-label={n}><Icon name={n} size={n === 'winLogo' || n === 'taskSearch' ? 11 : 14} /></Task>)}
        </Tasks>
        <Tray>
          <Icon name="chev" size={8} />
          <Icon name="shield" size={10} />
          <Icon name="network" size={11} />
          <Icon name="volume" size={10} />
          <span>ENG</span>
          <Clock>14:44<br />21.08.2020</Clock>
          <Icon name="action" size={12} />
        </Tray>
      </TaskBar>
    </Page>
  );
}
